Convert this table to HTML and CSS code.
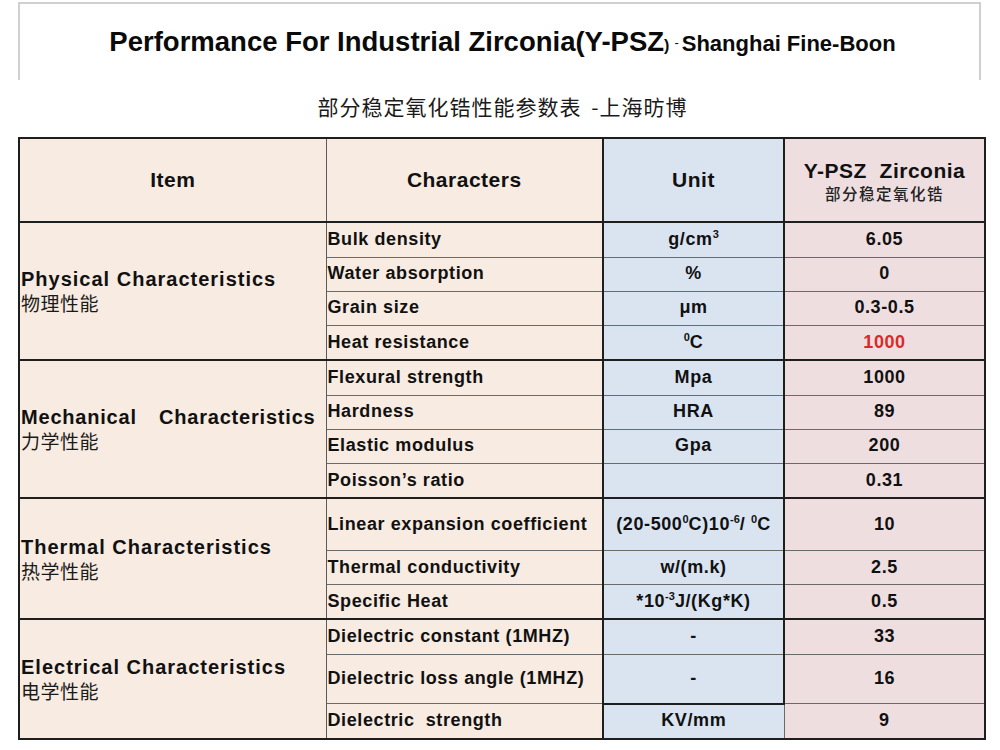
FILE: index.html
```html
<!DOCTYPE html>
<html lang="en">
<head>
<meta charset="utf-8">
<title>Performance For Industrial Zirconia (Y-PSZ)</title>
<link rel="stylesheet" href="styles.css">
</head>
<body>
<header class="title-box">
  <h1 class="title"><span class="t-main">Performance For Industrial Zirconia(Y-PSZ</span><span class="t-paren">)</span><span class="t-dash">-</span><span class="t-sub">Shanghai Fine-Boon</span></h1>
</header>
<p class="subtitle">部分稳定氧化锆性能参数表 <span class="sub-dash">-</span>上海昉博</p>
<table class="spec">
  <colgroup>
    <col class="c-item"><col class="c-char"><col class="c-unit"><col class="c-val">
  </colgroup>
  <thead>
    <tr class="h-head">
      <th class="peach">Item</th>
      <th class="peach">Characters</th>
      <th class="blue">Unit</th>
      <th class="pink"><span class="h-en">Y-PSZ&nbsp; Zirconia</span><span class="h-cn">部分稳定氧化锆</span></th>
    </tr>
  </thead>
  <tbody class="group">
    <tr class="r35">
      <td class="grp peach" rowspan="4"><span class="g-en">Physical Characteristics</span><span class="g-cn">物理性能</span></td>
      <td class="name peach">Bulk density</td>
      <td class="unit blue">g/cm<sup>3</sup></td>
      <td class="val pink">6.05</td>
    </tr>
    <tr class="r34"><td class="name peach">Water absorption</td><td class="unit blue">%</td><td class="val pink">0</td></tr>
    <tr class="r35"><td class="name peach">Grain size</td><td class="unit blue">μm</td><td class="val pink">0.3-0.5</td></tr>
    <tr class="r34"><td class="name peach">Heat resistance</td><td class="unit blue"><sup>0</sup>C</td><td class="val pink red">1000</td></tr>
  </tbody>
  <tbody class="group">
    <tr class="r35">
      <td class="grp peach" rowspan="4"><span class="g-en justify">Mechanical Characteristics</span><span class="g-cn">力学性能</span></td>
      <td class="name peach">Flexural strength</td>
      <td class="unit blue">Mpa</td>
      <td class="val pink">1000</td>
    </tr>
    <tr class="r34"><td class="name peach">Hardness</td><td class="unit blue">HRA</td><td class="val pink">89</td></tr>
    <tr class="r35"><td class="name peach">Elastic modulus</td><td class="unit blue">Gpa</td><td class="val pink">200</td></tr>
    <tr class="r34"><td class="name peach">Poisson’s ratio</td><td class="unit blue"></td><td class="val pink">0.31</td></tr>
  </tbody>
  <tbody class="group">
    <tr class="r52">
      <td class="grp peach" rowspan="3"><span class="g-en">Thermal Characteristics</span><span class="g-cn">热学性能</span></td>
      <td class="name peach">Linear expansion coefficient</td>
      <td class="unit blue">(20-500<sup>0</sup>C)10<sup>-6</sup>/ <sup>0</sup>C</td>
      <td class="val pink">10</td>
    </tr>
    <tr class="r34"><td class="name peach">Thermal conductivity</td><td class="unit blue">w/(m.k)</td><td class="val pink">2.5</td></tr>
    <tr class="r34"><td class="name peach">Specific Heat</td><td class="unit blue">*10<sup>-3</sup>J/(Kg*K)</td><td class="val pink">0.5</td></tr>
  </tbody>
  <tbody class="group">
    <tr class="r35">
      <td class="grp peach" rowspan="3"><span class="g-en">Electrical Characteristics</span><span class="g-cn">电学性能</span></td>
      <td class="name peach">Dielectric constant (1MHZ)</td>
      <td class="unit blue">-</td>
      <td class="val pink">33</td>
    </tr>
    <tr class="r50"><td class="name peach">Dielectric loss angle (1MHZ)</td><td class="unit blue">-</td><td class="val pink">16</td></tr>
    <tr class="r36 last"><td class="name peach">Dielectric&nbsp; strength</td><td class="unit blue open">KV/mm</td><td class="val pink">9</td></tr>
  </tbody>
</table>
</body>
</html>
```
FILE: styles.css
```css
html, body {
  margin: 0;
  padding: 0;
  background: #ffffff;
}
body {
  font-family: "Liberation Sans", Arial, "Noto Sans CJK SC", sans-serif;
  color: #111;
}
.title-box {
  margin: 2px 0 0 18px;
  width: 963px;
  height: 78px;
  border: 2px solid #d0d0d0;
  border-bottom: none;
  display: flex;
  align-items: center;
  justify-content: center;
  box-sizing: border-box;
  padding: 0 0 4px 6px;
}
.title {
  margin: 0;
  font-weight: bold;
  white-space: nowrap;
  line-height: 1;
  color: #0a0a0a;
}
.t-main {
  font-size: 27.5px;
}
.t-paren {
  font-size: 16px;
}
.t-dash {
  font-size: 13px;
  font-weight: normal;
  margin: 0 3px 0 5px;
  position: relative;
  top: -4px;
}
.t-sub {
  font-size: 22px;
}
.subtitle {
  margin: 11px 0 0;
  height: 30px;
  text-align: center;
  font-family: "Noto Sans CJK SC", sans-serif;
  font-size: 21px;
  line-height: 30px;
  letter-spacing: 1px;
  color: #1a1a1a;
  padding-left: 5px;
}
.sub-dash {
  margin-left: 4px;
}
.spec {
  margin: 16px 0 0 18px;
  border-collapse: collapse;
  table-layout: fixed;
  width: 966px;
  border: 2px solid #1e1e1e;
}
.c-item { width: 307px; }
.c-char { width: 277px; }
.c-unit { width: 181px; }
.c-val  { width: 201px; }
.peach { background: #f8ebe1; }
.blue  { background: #dae4f1; }
.pink  { background: #efdee0; }
.spec th, .spec td {
  padding: 0 1px;
  font-weight: bold;
  border-top: 1px solid #6a6a6a;
  border-bottom: 1px solid #6a6a6a;
  border-left: 1px solid #5a5a5a;
  border-right: 1px solid #5a5a5a;
  line-height: 1.1;
}
.spec th {
  height: 82px;
  font-size: 21px;
  letter-spacing: 0.5px;
  text-align: center;
  border-bottom: 2px solid #1e1e1e;
}
.spec th.blue, .spec td.blue {
  border-left: 2px solid #1e1e1e;
  border-right: 2px solid #1e1e1e;
}
.spec td.blue.open {
  border-right: 1px solid #6a6a6a;
  border-top: 2px solid #1e1e1e;
}
.h-en {
  display: block;
  padding-top: 2px;
}
.h-cn {
  display: block;
  font-family: "Noto Sans CJK SC", sans-serif;
  font-size: 15.5px;
  font-weight: 500;
  letter-spacing: 1.5px;
  line-height: 20px;
  color: #222;
}
.group {
  border-top: 2px solid #1e1e1e;
}
.group td {
  font-size: 18px;
  letter-spacing: 0.6px;
}
.r34 td { height: 33px; }
.r35 td { height: 33.5px; }
.r36 td { height: 33px; }
.r50 td { height: 48px; }
.r52 td { height: 51px; }
.grp {
  text-align: left;
  vertical-align: middle;
}
.g-en {
  display: block;
  font-size: 20px;
  letter-spacing: 1px;
  line-height: 24px;
}
.g-en.justify {
  text-align: justify;
  text-align-last: justify;
  letter-spacing: 0.8px;
  padding-right: 9px;
}
.g-cn {
  display: block;
  font-family: "Noto Sans CJK SC", sans-serif;
  font-weight: 400;
  font-size: 19px;
  letter-spacing: 0.5px;
  line-height: 24px;
  color: #1a1a1a;
}
.name {
  text-align: left;
  padding-left: 2px;
}
.unit, .val {
  text-align: center;
}
.red {
  color: #d92a2a;
}
sup {
  font-size: 11px;
  line-height: 0;
  vertical-align: 7px;
  letter-spacing: 0;
}
```
